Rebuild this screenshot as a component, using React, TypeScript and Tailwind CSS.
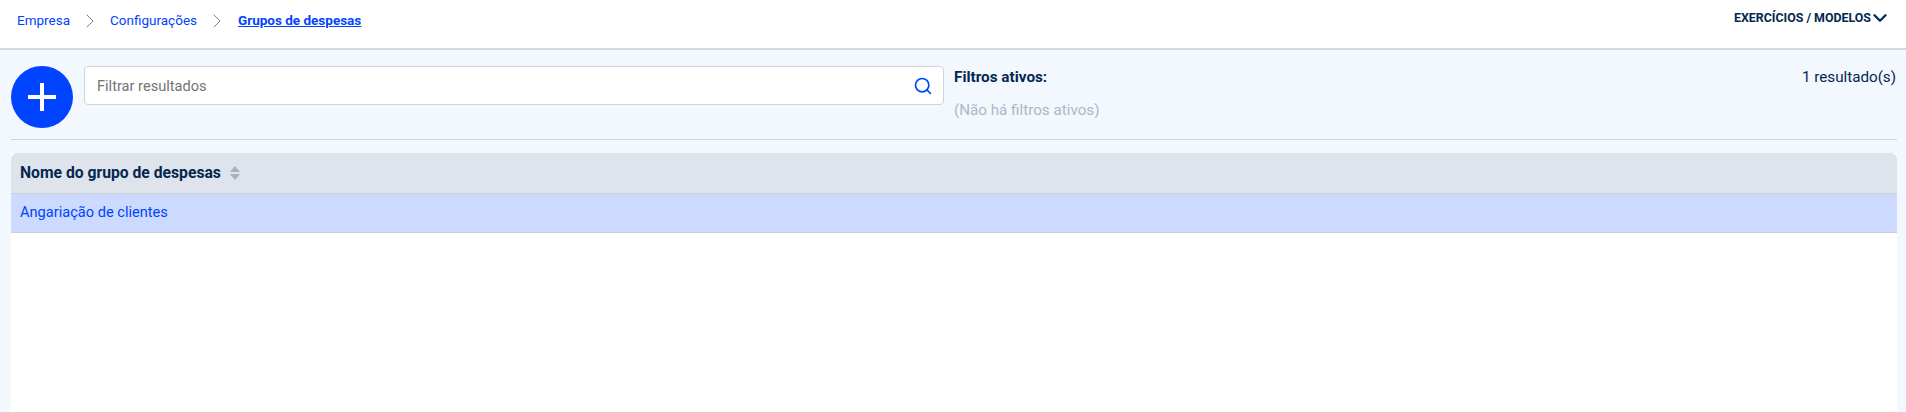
import { ChevronDown, ChevronRight, Search } from "lucide-react";

export default function App() {
  return (
    <div className="h-[412px] overflow-hidden bg-[#f3f8ff] font-['Roboto',sans-serif] text-[#03274f]">
      <header className="flex h-[50px] items-start justify-between border-b-2 border-[#cfd8e3] bg-white pl-[17px] pr-[15px]">
        <nav className="flex h-[41px] items-center text-[13.5px] text-[#0044ff]">
          <a>Empresa</a>
          <ChevronRight className="mx-[8px] h-[24px] w-[24px] text-[#77818f]" strokeWidth={1} />
          <a>Configurações</a>
          <ChevronRight className="mr-[9px] ml-[8px] h-[24px] w-[24px] text-[#77818f]" strokeWidth={1} />
          <a className="font-bold underline">Grupos de despesas</a>
        </nav>
        <button className="flex h-[36px] items-center text-[12.4px] font-bold">
          EXERCÍCIOS / MODELOS
          <ChevronDown className="-ml-[2px] h-[22px] w-[22px]" strokeWidth={2.5} />
        </button>
      </header>

      <div className="pl-[11px] pr-[9px]">
        <div className="flex h-[90px] items-start border-b border-[#ccd4de] pt-[16px]">
          <button className="flex h-[62px] w-[62px] shrink-0 items-center justify-center rounded-full bg-[#0044ff]">
            <svg className="h-[28px] w-[28px]" viewBox="0 0 28 28" fill="none" stroke="white" strokeWidth={4}>
              <path d="M14 0v28M0 14h28" />
            </svg>
          </button>
          <div className="ml-[11px] flex h-[39px] w-[860px] shrink-0 items-center justify-between rounded border border-[#ccd4de] bg-white pl-3 pr-[10px]">
            <input
              className="w-full bg-white pt-[2px] text-[14.6px] outline-none placeholder:text-[#747474]"
              placeholder="Filtrar resultados"
            />
            <Search className="h-[20px] w-[20px] shrink-0 text-[#0044ff]" strokeWidth={2} />
          </div>
          <div className="ml-[10px] flex-1">
            <div className="text-[15.3px] leading-[22px] font-bold">Filtros ativos:</div>
            <div className="mt-[11px] text-[15.2px] leading-[22px] text-[#adb7c6]">(Não há filtros ativos)</div>
          </div>
          <div className="pr-[1px] text-[15.2px] leading-[22px]">1 resultado(s)</div>
        </div>

        <div className="mt-[13px] min-h-[300px] bg-white">
          <div className="flex h-[41px] items-center rounded-t-md border-b border-[#cdd1d6] bg-[#dfe3eb] px-[9px] text-[15.7px] font-bold">
            Nome do grupo de despesas
            <svg className="ml-[9px] h-[14px] w-[10px] text-[#a9b0ba]" viewBox="0 0 10 14" fill="currentColor">
              <path d="M5 0 10 6H0Z" />
              <path d="M0 8h10L5 14Z" />
            </svg>
          </div>
          <div className="flex h-[39px] items-center border-b border-[#cdd1d6] bg-[#cbdafe] px-[9px] text-[14.6px] text-[#0044ff]">
            Angariação de clientes
          </div>
        </div>
      </div>
    </div>
  );
}
